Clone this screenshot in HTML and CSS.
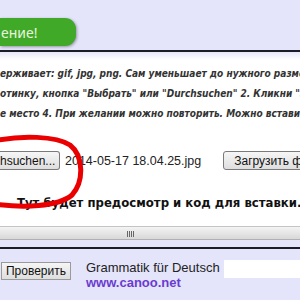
FILE: index.html
```html
<!DOCTYPE html>
<html lang="ru">
<head>
    <meta charset="UTF-8">
    <title>Загрузка картинок</title>
    <link rel="stylesheet" href="styles.css">
</head>
<body>
<div class="page">

    <!-- Верхняя полоса с зелёной кнопкой -->
    <div class="top">
        <span class="save-btn">ение!</span>
    </div>

    <!-- Форма загрузки -->
    <div class="upload">
        <div class="hint">
            <div class="hint-line">ерживает: gif, jpg, png. Сам уменьшает до нужного разме</div>
            <div class="hint-line">отинку, кнопка "Выбрать" или "Durchsuchen" 2. Кликни "З</div>
            <div class="hint-line">е место 4. При желании можно повторить. Можно вставить</div>
        </div>

        <div class="file-row">
            <button class="btn browse">hsuchen...</button>
            <span class="file-name">2014-05-17 18.04.25.jpg</span>
            <button class="btn send">Загрузить ф</button>
        </div>

        <div class="preview">Тут будет предосмотр и код для вставки..</div>
    </div>

    <!-- Горизонтальная прокрутка -->
    <div class="hscroll"><span class="grip"></span></div>

    <!-- Проверка орфографии -->
    <div class="spell">
        <span class="spell-input-edge"></span>
        <button class="btn check">Проверить</button>
        <div class="canoo">
            <div class="canoo-title">Grammatik für Deutsch</div>
            <div class="canoo-link">www.canoo.net</div>
        </div>
        <span class="spell-input"></span>
    </div>

    <!-- Красный обвод вокруг кнопки -->
    <svg class="mark" width="90" height="90" viewBox="0 0 90 90">
        <path d="M -6 13 C 21 7, 56 8, 70 17 C 84 28, 84 54, 72 67 C 58 79, 23 80, -6 76"
              fill="none" stroke="#ea0000" stroke-width="5" stroke-linecap="round"/>
    </svg>
</div>
</body>
</html>
```

FILE: styles.css
```css
body {
    margin: 0;
    background-color: #fff;
    font-family: 'Liberation Sans', Arial, sans-serif;
}

.page {
    position: relative;
    width: 300px;
    height: 300px;
    overflow: hidden;
}

/* Верхняя полоса */
.top {
    height: 52px;
    padding-top: 18px;
    box-sizing: border-box;
    background-color: #e4e4fa;
    border-bottom: 2px solid #1c1c28;
}

.save-btn {
    display: flex;
    align-items: center;
    width: 76px;
    height: 28px;
    padding-left: 1px;
    box-sizing: border-box;
    background-color: #41a928;
    border-radius: 0 11px 11px 0;
    box-shadow: 1px 1px 3px rgba(0, 0, 0, 0.35);
    color: #e6f5de;
    font-family: 'Noto Sans', sans-serif;
    font-size: 14px;
}

/* Форма загрузки */
.upload {
    height: 174px;
    padding-top: 12px;
    box-sizing: border-box;
    background: linear-gradient(#e6e6fa 0, #fff 8px);
}

.hint-line {
    white-space: nowrap;
    line-height: 20px;
    font-family: 'DejaVu Sans Condensed', 'DejaVu Sans', sans-serif;
    font-size: 10px;
    font-weight: bold;
    font-style: italic;
    color: #333;
}

.file-row {
    display: flex;
    align-items: center;
    margin-top: 27px;
    height: 19px;
    white-space: nowrap;
}

.btn {
    height: 19px;
    margin: 0;
    padding: 0 6px;
    border: 1px solid #7a7a7a;
    border-radius: 3px;
    background: linear-gradient(#f6f6f6, #dedede);
    font-family: 'Liberation Sans', Arial, sans-serif;
    font-size: 12px;
    color: #111;
    flex-shrink: 0;
}

.browse {
    width: 60px;
    padding: 0;
    border-left: none;
    border-radius: 0 3px 3px 0;
    text-align: left;
}

.file-name {
    margin-left: 5px;
    font-size: 12.5px;
    color: #222;
}

.send {
    margin-left: 22px;
    padding-left: 10px;
    text-align: left;
    width: 110px;
}

.preview {
    margin-top: 24px;
    padding-left: 17px;
    white-space: nowrap;
    line-height: 18px;
    font-family: 'DejaVu Sans Condensed', 'DejaVu Sans', sans-serif;
    font-size: 13px;
    font-weight: bold;
    color: #111;
}

/* Полоса прокрутки */
.hscroll {
    position: relative;
    height: 14px;
    box-sizing: border-box;
    border-top: 1px solid #c4c4c4;
    border-bottom: 1px solid #b0b0b0;
    background: linear-gradient(#f4f4f4, #d8d8d8);
}

.grip {
    position: absolute;
    left: 127px;
    top: 4px;
    width: 8px;
    height: 6px;
    background: repeating-linear-gradient(90deg, #666 0 1px, transparent 1px 2px);
}

/* Проверка орфографии */
.spell {
    display: flex;
    align-items: flex-start;
    height: 58px;
    padding-top: 11px;
    box-sizing: border-box;
    margin-top: 7px;
    border-top: 2px solid #1c1c28;
    background-color: #e4e4fa;
    box-shadow: 0 -7px 0 #e4e4fa;
}

.spell-input-edge {
    width: 2px;
    height: 20px;
    background-color: #fff;
}

.check {
    margin-left: 1px;
    margin-top: 2px;
    width: 70px;
    height: 18px;
    padding: 0;
    border-radius: 0;
    border-color: #9a9a9a;
}

.canoo {
    margin-left: 15px;
    line-height: 15px;
    white-space: nowrap;
}

.canoo-title {
    font-size: 13px;
    color: #222;
}

.canoo-link {
    font-size: 13px;
    font-weight: bold;
    color: #6a3bd0;
}

.spell-input {
    margin-left: 4px;
    width: 80px;
    height: 18px;
    background-color: #fff;
    flex-shrink: 0;
}

/* Красный обвод */
.mark {
    position: absolute;
    left: 0;
    top: 128px;
}
```
